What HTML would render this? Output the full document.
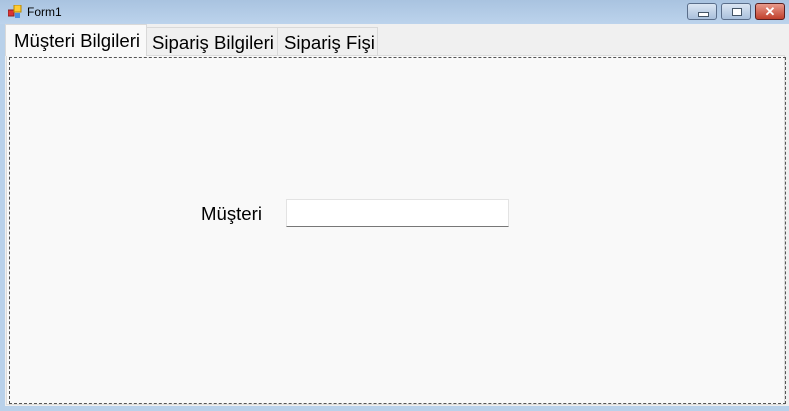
<!DOCTYPE html><html><head><style>
body{margin:0;width:789px;height:411px;overflow:hidden;position:relative;background:#b9d1ea;font-family:"Liberation Sans",sans-serif}
.title{position:absolute;left:0;top:0;width:789px;height:24px;background:linear-gradient(#a9c3e0,#bcd3ec)}
.client{position:absolute;left:5px;top:24px;width:784px;height:382px;background:#f0f0f0}
.page{position:absolute;left:6px;top:55px;width:779px;height:350px;background:#f9f9f9;border:1px solid #dcdcdc;box-sizing:border-box}
.dash{position:absolute;left:9px;top:57px;width:777px;height:347px;border:1px dashed #555;box-sizing:border-box}
.tab{position:absolute;font-size:18.6px;color:#000;box-sizing:border-box;border:1px solid #d9d9d9;border-bottom:none;background:#f0f0f0;white-space:nowrap}
.btn{position:absolute;top:3px;height:17px;border:1px solid #5a6e8a;border-radius:3px;box-sizing:border-box}
</style></head><body>
<div class="title"></div>
<svg style="position:absolute;left:8px;top:5px" width="14" height="14"><rect x="0" y="5" width="6" height="6" fill="#d33" stroke="#822" stroke-width="1"/><rect x="6" y="0" width="7" height="7" fill="#fc3" stroke="#b80"/><rect x="7" y="8" width="5" height="5" fill="#4a8ee0"/></svg>
<div style="position:absolute;left:27px;top:5px;font-size:12px;color:#000">Form1</div>
<div class="btn" style="left:687px;width:30px;background:linear-gradient(#dbe6f3,#a9c0dc)"><div style="position:absolute;left:10px;top:8px;width:9px;height:3px;background:#fff;border:1px solid #456"></div></div>
<div class="btn" style="left:721px;width:30px;background:linear-gradient(#dbe6f3,#a9c0dc)"><div style="position:absolute;left:10px;top:4px;width:8px;height:6px;background:#fff;border:1px solid #456"></div></div>
<div class="btn" style="left:755px;width:30px;border-color:#5a2020;background:linear-gradient(#e89a8c,#c0402c)"><div style="position:absolute;left:0;width:28px;top:0;text-align:center;font-size:13px;font-weight:bold;color:#fff;line-height:15px">✕</div></div>
<div class="client"></div>
<div class="page"></div>
<div class="dash"></div>
<div class="tab" style="left:146px;top:27px;width:132px;height:28px;padding:4px 0 0 5px">Sipariş Bilgileri</div>
<div class="tab" style="left:277px;top:27px;width:101px;height:28px;padding:4px 0 0 6px">Sipariş Fişi</div>
<div class="tab" style="left:5px;top:24px;width:142px;height:32px;background:#f9f9f9;padding:5px 0 0 8px;z-index:2">Müşteri Bilgileri</div>
<div style="position:absolute;left:201px;top:203px;font-size:18.6px">Müşteri</div>
<div style="position:absolute;left:286px;top:199px;width:223px;height:28px;background:#fff;border:1px solid #e3e3e3;border-bottom:1px solid #777;box-sizing:border-box"></div>
</body></html>
